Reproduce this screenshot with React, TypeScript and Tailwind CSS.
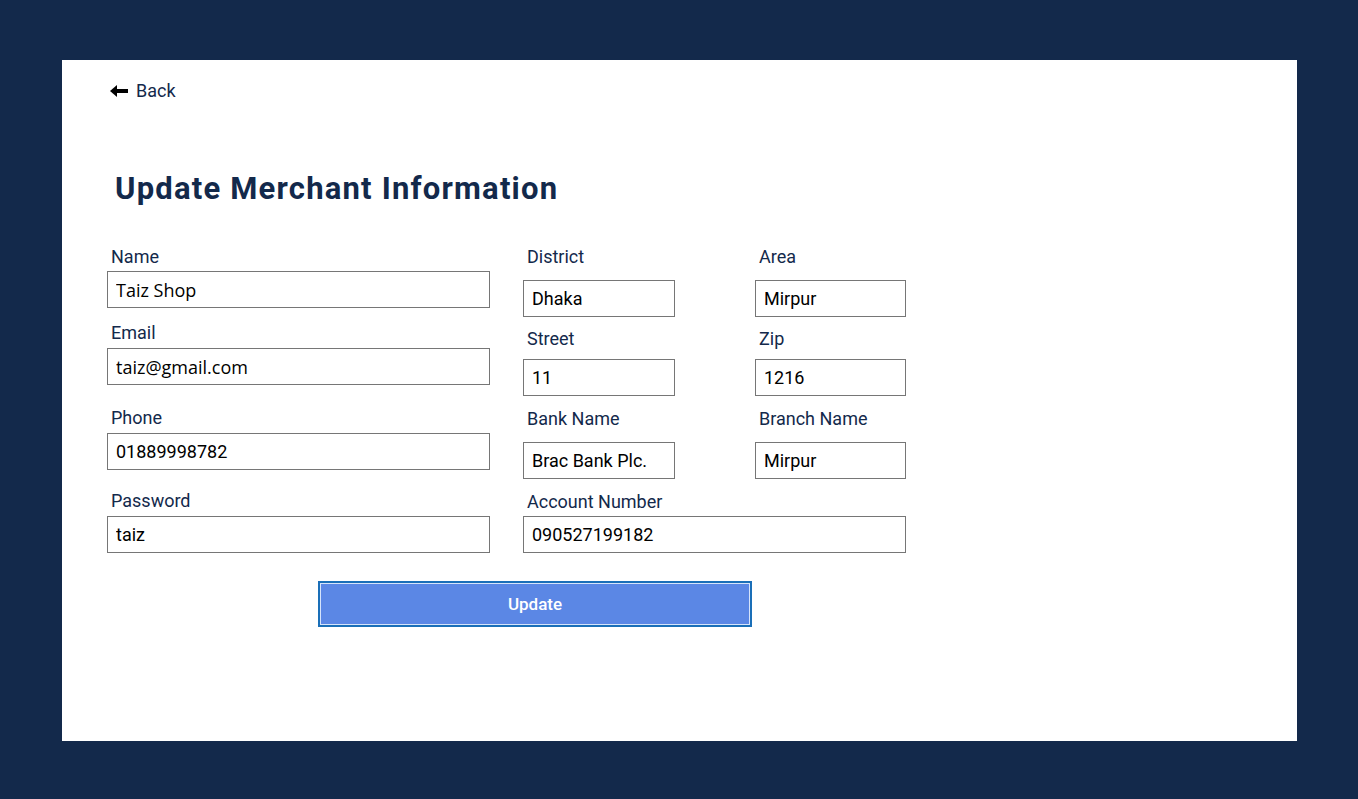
const label = "block text-[18px] leading-[22px] text-[#13294b] pl-1";
const box =
  "block w-full h-[37px] border border-[#767676] bg-white px-2 text-[18px] text-black outline-none";

const Field = ({
  name,
  value,
  gap,
  top,
  sans,
}: {
  name: string;
  value: string;
  gap: string;
  top: string;
  sans?: boolean;
}) => (
  <div className={top}>
    <label className={label}>{name}</label>
    <input
      readOnly
      value={value}
      className={`${box} ${gap} ${sans ? "font-['Open_Sans',sans-serif]" : ""}`}
    />
  </div>
);

const BackArrow = () => (
  <svg width="18" height="12" viewBox="0 0 18 12" className="shrink-0">
    <polygon points="0,6 7,0 7,12" fill="#000" />
    <rect x="6" y="4" width="12" height="4" fill="#000" />
  </svg>
);

const App = () => {
  return (
    <div className="min-h-screen bg-[#13294b] pl-[62px] pr-[61px] pt-[60px] pb-[58px] font-['Roboto',sans-serif]">
      <div className="h-[681px] bg-white">
        <div className="pl-[48px] pt-[17px]">
          <button className="flex items-center gap-2 text-[18px] leading-[28px] text-[#13294b]">
            <BackArrow />
            Back
          </button>
        </div>

        <h1 className="pl-[53px] pt-[65px] text-[31px] leading-[38px] font-bold tracking-[1.2px] text-[#13294b]">
          Update Merchant Information
        </h1>

        <div className="flex pl-[45px] pt-[38px]">
          <div className="w-[383px]">
            <Field name="Name" value="Taiz Shop" top="" gap="mt-[3px]" sans />
            <Field name="Email" value="taiz@gmail.com" top="mt-[14px]" gap="mt-[4px]" sans />
            <Field name="Phone" value="01889998782" top="mt-[22px]" gap="mt-[4px]" />
            <Field name="Password" value="taiz" top="mt-[20px]" gap="mt-[4px]" />
          </div>

          <div className="ml-[33px] w-[383px]">
            <div className="flex gap-[80px]">
              <div className="w-[152px]">
                <Field name="District" value="Dhaka" top="" gap="mt-[12px]" />
                <Field name="Street" value="11" top="mt-[11px]" gap="mt-[9px]" />
                <Field name="Bank Name" value="Brac Bank Plc." top="mt-[12px]" gap="mt-[12px]" />
              </div>
              <div className="w-[151px]">
                <Field name="Area" value="Mirpur" top="" gap="mt-[12px]" />
                <Field name="Zip" value="1216" top="mt-[11px]" gap="mt-[9px]" />
                <Field name="Branch Name" value="Mirpur" top="mt-[12px]" gap="mt-[12px]" />
              </div>
            </div>
            <Field name="Account Number" value="090527199182" top="mt-[12px]" gap="mt-[3px]" />
          </div>
        </div>

        <div className="pl-[256px] pt-[28px]">
          <button className="h-[46px] w-[434px] border-2 border-[#1a6fb8] bg-[#5b87e5] pt-[2px] text-[17px] font-medium text-white shadow-[inset_0_0_0_1px_#d6e4fb]">
            Update
          </button>
        </div>
      </div>
    </div>
  );
};

export default App;
